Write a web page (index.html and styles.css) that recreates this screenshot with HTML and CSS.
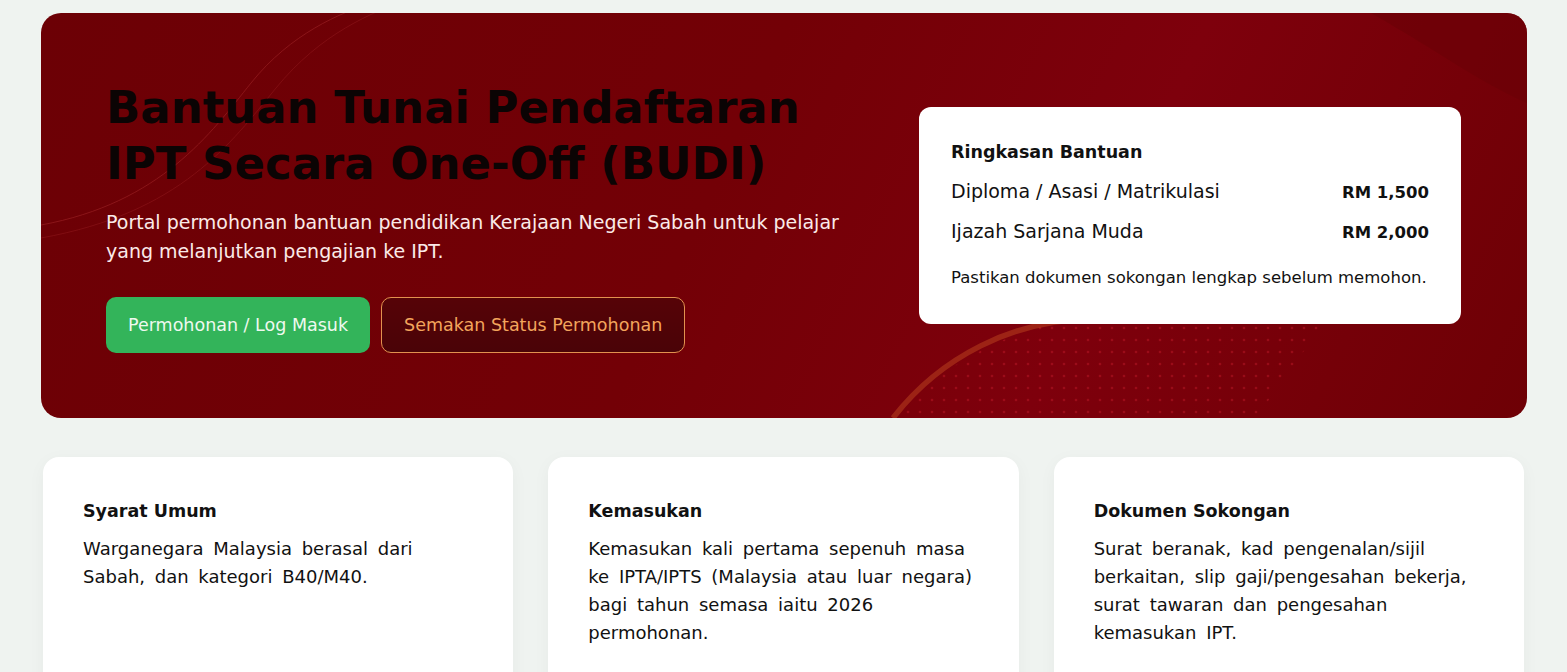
FILE: index.html
```html
<!DOCTYPE html>
<html lang="ms">
<head>
  <meta charset="UTF-8" />
  <meta name="viewport" content="width=device-width, initial-scale=1" />
  <title>Bantuan Tunai Pendaftaran IPT (BUDI)</title>
  <link rel="stylesheet" href="styles.css">
</head>
<body>

  <section class="hero">
    <svg class="hero-deco" viewBox="0 0 1486 405" preserveAspectRatio="none" aria-hidden="true">
      <defs>
        <pattern id="dots" width="12" height="12" patternUnits="userSpaceOnUse">
          <circle cx="3" cy="3" r="1.3" fill="#c21a2a" opacity="0.45" />
        </pattern>
      </defs>
      <path d="M0 212 C 120 190, 170 120, 210 70 S 300 0, 330 -10" fill="none" stroke="#a3262a" stroke-width="1" opacity="0.55" />
      <path d="M0 225 C 140 200, 190 130, 235 75 S 330 0, 370 -15" fill="none" stroke="#a3262a" stroke-width="1" opacity="0.35" />
      <path d="M1330 0 C 1400 40, 1440 70, 1486 90 L1486 0 Z" fill="#6a0006" opacity="0.6" />
      <path d="M852 405 C 900 350, 980 310, 1060 300 L1290 300 L1215 405 Z" fill="url(#dots)" />
      <path d="M852 405 A 255 255 0 0 1 1050 306" fill="none" stroke="#b8401f" stroke-width="5.5" opacity="0.55" />
    </svg>

    <div class="hero-text">
      <h1>Bantuan Tunai Pendaftaran IPT Secara One-Off (BUDI)</h1>
      <p class="lead">Portal permohonan bantuan pendidikan Kerajaan Negeri Sabah untuk pelajar yang melanjutkan pengajian ke IPT.</p>
      <div class="actions">
        <a href="#" class="btn btn-primary">Permohonan / Log Masuk</a>
        <a href="#" class="btn btn-outline">Semakan Status Permohonan</a>
      </div>
    </div>

    <aside class="summary">
      <h3>Ringkasan Bantuan</h3>
      <div class="summary-row">
        <span>Diploma / Asasi / Matrikulasi</span>
        <strong>RM 1,500</strong>
      </div>
      <div class="summary-row">
        <span>Ijazah Sarjana Muda</span>
        <strong>RM 2,000</strong>
      </div>
      <p class="note">Pastikan dokumen sokongan lengkap sebelum memohon.</p>
    </aside>
  </section>

  <section class="info">
    <div class="card">
      <h4>Syarat Umum</h4>
      <p>Warganegara Malaysia berasal dari Sabah, dan kategori B40/M40.</p>
    </div>
    <div class="card">
      <h4>Kemasukan</h4>
      <p>Kemasukan kali pertama sepenuh masa ke IPTA/IPTS (Malaysia atau luar negara) bagi tahun semasa iaitu 2026 permohonan.</p>
    </div>
    <div class="card">
      <h4>Dokumen Sokongan</h4>
      <p>Surat beranak, kad pengenalan/sijil berkaitan, slip gaji/pengesahan bekerja, surat tawaran dan pengesahan kemasukan IPT.</p>
    </div>
  </section>

</body>
</html>
```

FILE: styles.css
```css
* { box-sizing: border-box; }

body {
  margin: 0;
  padding: 13px 0 0;
  font-family: 'DejaVu Sans', 'Noto Sans', sans-serif;
  background-color: #eff3f0;
  color: #111;
  overflow: hidden;
}

.hero {
  position: relative;
  margin: 0 40px 0 41px;
  height: 405px;
  border-radius: 20px;
  overflow: hidden;
  background: linear-gradient(115deg, #6c0005 0%, #730006 45%, #7e000c 70%, #6e0005 100%);
  display: flex;
  align-items: center;
  justify-content: space-between;
  padding: 0 66px 0 65px;
}

.hero-deco {
  position: absolute;
  top: 0;
  left: 0;
  width: 100%;
  height: 100%;
  z-index: 0;
}

.hero-text {
  position: relative;
  z-index: 1;
  width: 740px;
  margin-top: 2px;
}

h1 {
  margin: 0;
  font-size: 45px;
  line-height: 56px;
  font-weight: 700;
  color: #0b0404;
}

.lead {
  margin: 16px 0 0;
  font-size: 19px;
  line-height: 29px;
  color: #fbeae8;
}

.actions {
  display: flex;
  gap: 11px;
  margin-top: 31px;
}

.btn {
  display: inline-flex;
  align-items: center;
  height: 56px;
  padding: 0 22px;
  border-radius: 10px;
  font-size: 17.5px;
  text-decoration: none;
}

.btn-primary {
  background-color: #33b45a;
  color: #eef9ef;
}

.btn-outline {
  background: linear-gradient(180deg, #560307, #4a0307);
  border: 1.5px solid #e2914f;
  color: #f3a55c;
}

.summary {
  position: relative;
  z-index: 1;
  width: 542px;
  background-color: white;
  border-radius: 12px;
  padding: 31px 32px 33px;
}

.summary h3 {
  margin: 0 0 6px;
  font-size: 17.5px;
  line-height: 28px;
  font-weight: 700;
}

.summary-row {
  display: flex;
  justify-content: space-between;
  align-items: baseline;
  font-size: 19px;
  line-height: 39px;
}

.summary-row strong {
  font-weight: 700;
  font-size: 16.5px;
}

.note {
  margin: 13px 0 0;
  font-size: 16.5px;
  line-height: 26px;
}

.info {
  display: grid;
  grid-template-columns: repeat(3, 1fr);
  gap: 35px;
  margin: 39px 43px 0;
}

.card {
  background-color: white;
  border-radius: 16px;
  padding: 41px 30px 40px 40px;
  min-height: 260px;
  box-shadow: 0 4px 18px rgba(0, 0, 0, 0.04);
}

.card h4 {
  margin: 0;
  font-size: 17.5px;
  line-height: 26px;
  font-weight: 700;
}

.card p {
  margin: 11px 0 0;
  font-size: 18px;
  line-height: 28px;
  word-spacing: 4px;
}
```
